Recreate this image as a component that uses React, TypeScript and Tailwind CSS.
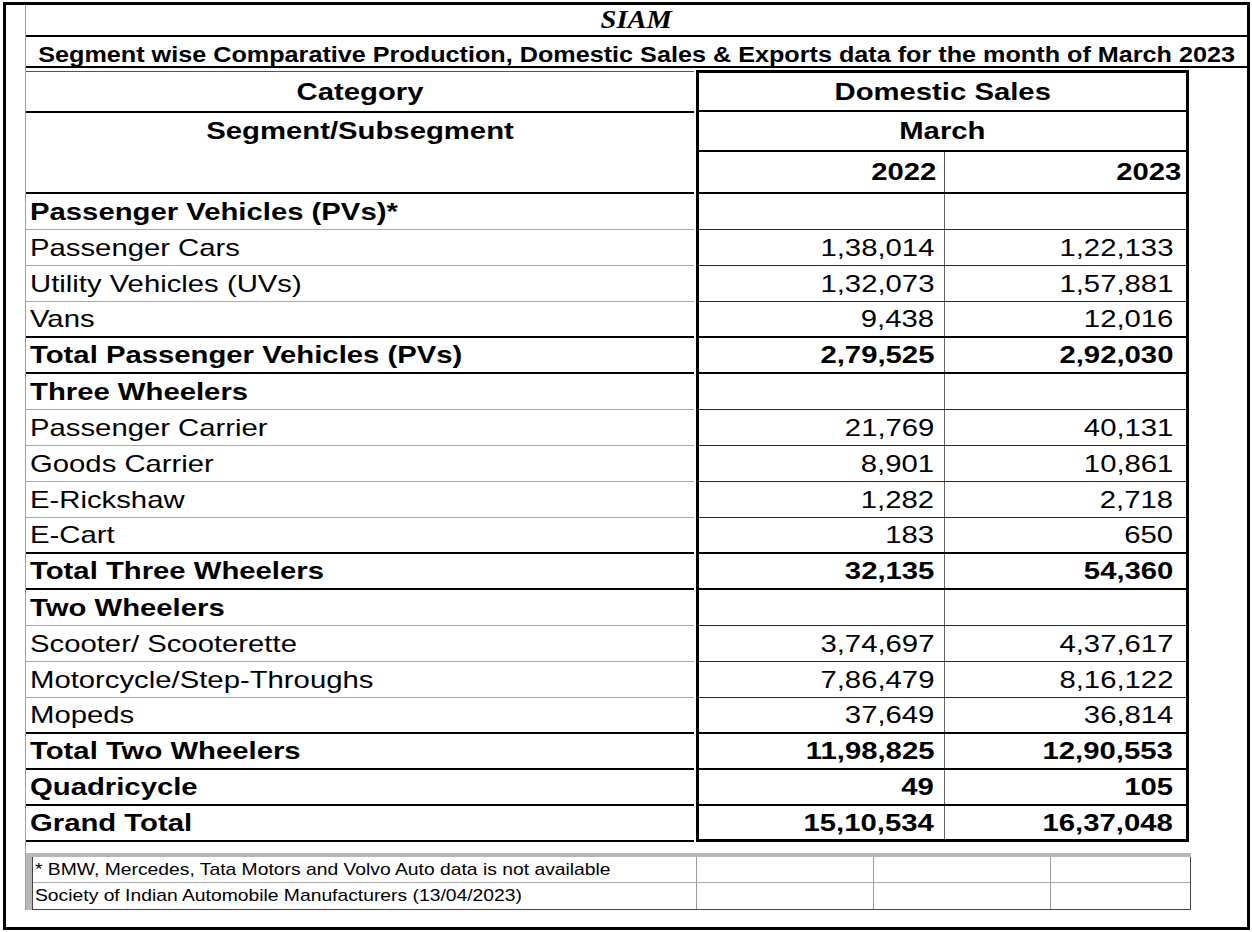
import clsx from "clsx";

interface IRow {
  label: string;
  a?: string;
  b?: string;
  bold?: boolean;
  thick?: boolean;
}

const rows: IRow[] = [
  { label: "Passenger Vehicles (PVs)*", bold: true },
  { label: "Passenger Cars", a: "1,38,014", b: "1,22,133" },
  { label: "Utility Vehicles (UVs)", a: "1,32,073", b: "1,57,881" },
  { label: "Vans", a: "9,438", b: "12,016", thick: true },
  { label: "Total Passenger Vehicles (PVs)", a: "2,79,525", b: "2,92,030", bold: true, thick: true },
  { label: "Three Wheelers", bold: true },
  { label: "Passenger Carrier", a: "21,769", b: "40,131" },
  { label: "Goods Carrier", a: "8,901", b: "10,861" },
  { label: "E-Rickshaw", a: "1,282", b: "2,718" },
  { label: "E-Cart", a: "183", b: "650", thick: true },
  { label: "Total Three Wheelers", a: "32,135", b: "54,360", bold: true, thick: true },
  { label: "Two Wheelers", bold: true },
  { label: "Scooter/ Scooterette", a: "3,74,697", b: "4,37,617" },
  { label: "Motorcycle/Step-Throughs", a: "7,86,479", b: "8,16,122" },
  { label: "Mopeds", a: "37,649", b: "36,814", thick: true },
  { label: "Total Two Wheelers", a: "11,98,825", b: "12,90,553", bold: true, thick: true },
  { label: "Quadricycle", a: "49", b: "105", bold: true, thick: true },
  { label: "Grand Total", a: "15,10,534", b: "16,37,048", bold: true, thick: true },
];

// the source picture is stretched sideways, so text gets a scaleX
const Txt = ({
  children,
  origin = "left",
  bold = false,
}: {
  children: React.ReactNode;
  origin?: "left" | "right" | "center";
  bold?: boolean;
}) => (
  <span
    className={clsx(
      "inline-block whitespace-nowrap scale-x-[1.22] leading-[26px]",
      origin === "left" && "origin-left",
      origin === "right" && "origin-right",
      origin === "center" && "origin-center",
      bold && "font-bold"
    )}
  >
    {children}
  </span>
);

const App = () => {
  return (
    <div className="w-[1252px] h-[932px] bg-white pt-[2px] pl-[3px] overflow-hidden text-black font-['Liberation_Sans',Arial,sans-serif]">
      <div className="w-[1247px] h-[928px] border-[3px] border-black flex">
        <div className="w-[19px] shrink-0" />
        <div className="flex-1 flex flex-col border-l border-[#9a9cae] self-start">
          {/* title */}
          <div className="h-[32px] border-b-2 border-black flex justify-center">
            <span className="inline-block scale-x-[1.14] origin-center font-['Liberation_Serif','Times_New_Roman',serif] italic font-bold text-[25px] leading-[30px]">
              SIAM
            </span>
          </div>
          <div className="h-[31px] border-b-2 border-black flex justify-center pt-[7px]">
            <span className="inline-block whitespace-nowrap scale-x-[1.145] origin-center font-bold text-[22px] leading-[22px]">
              Segment wise Comparative Production, Domestic Sales &amp; Exports data for the month of March 2023
            </span>
          </div>

          {/* main table */}
          <div className="flex mt-[2px] text-[24px]">
            <div className="w-[668px] mt-[1px] border-t border-[#555] flex flex-col">
              <div className="h-[41px] border-b-2 border-black flex items-center justify-center">
                <Txt origin="center" bold>Category</Txt>
              </div>
              <div className="h-[81px] border-b-2 border-black flex justify-center pt-[5px]">
                <Txt origin="center" bold>Segment/Subsegment</Txt>
              </div>
              {rows.map((r) => (
                <div
                  key={r.label}
                  className={clsx(
                    "h-[36px] flex items-center pl-[4px]",
                    r.thick ? "border-b-2 border-black" : "border-b border-[#a8a8a8]"
                  )}
                >
                  <Txt bold={r.bold}>{r.label}</Txt>
                </div>
              ))}
            </div>

            <div className="w-[2px]" />

            <div className="w-[493px] border-t-[3px] border-x-[3px] border-black flex flex-col">
              <div className="h-[39px] border-b-2 border-black flex items-center justify-center">
                <Txt origin="center" bold>Domestic Sales</Txt>
              </div>
              <div className="h-[40px] border-b-2 border-black flex items-center justify-center">
                <Txt origin="center" bold>March</Txt>
              </div>
              <div className="h-[42px] border-b-2 border-black flex">
                <div className="w-[246px] border-r border-[#555] flex items-center justify-end pr-[8px]">
                  <Txt origin="right" bold>2022</Txt>
                </div>
                <div className="flex-1 flex items-center justify-end pr-[5px]">
                  <Txt origin="right" bold>2023</Txt>
                </div>
              </div>
              {rows.map((r, i) => (
                <div
                  key={r.label}
                  className={clsx(
                    "h-[36px] flex",
                    i === rows.length - 1
                      ? "border-b-[3px] border-black"
                      : r.thick
                      ? "border-b-2 border-black"
                      : "border-b border-[#2a2a2a]"
                  )}
                >
                  <div className="w-[246px] border-r border-[#666] flex items-center justify-end pr-[10px]">
                    {r.a && <Txt origin="right" bold={r.bold}>{r.a}</Txt>}
                  </div>
                  <div className="flex-1 flex items-center justify-end pr-[13px]">
                    {r.b && <Txt origin="right" bold={r.bold}>{r.b}</Txt>}
                  </div>
                </div>
              ))}
            </div>
          </div>

          {/* footer notes */}
          <div className="mt-[11px] w-[1165px] border-t-4 border-l-[6px] border-[#b8b8b8] text-[17px]">
            <div className="border-l border-r border-b border-[#444] flex flex-col">
              {[
                "* BMW, Mercedes, Tata Motors and Volvo Auto data is not available",
                "Society of Indian Automobile Manufacturers (13/04/2023)",
              ].map((t, i) => (
                <div
                  key={t}
                  className={clsx("h-[26px] flex", i === 0 && "border-b border-[#aaa]")}
                >
                  <div className="w-[663px] flex items-center pl-[2px]">
                    <span className="inline-block whitespace-nowrap scale-x-[1.135] origin-left leading-[20px]">
                      {t}
                    </span>
                  </div>
                  <div className="w-[177px] border-l border-[#999]" />
                  <div className="w-[177px] border-l border-[#999]" />
                  <div className="flex-1 border-l border-[#999]" />
                </div>
              ))}
            </div>
          </div>
        </div>
      </div>
    </div>
  );
};

export default App;
